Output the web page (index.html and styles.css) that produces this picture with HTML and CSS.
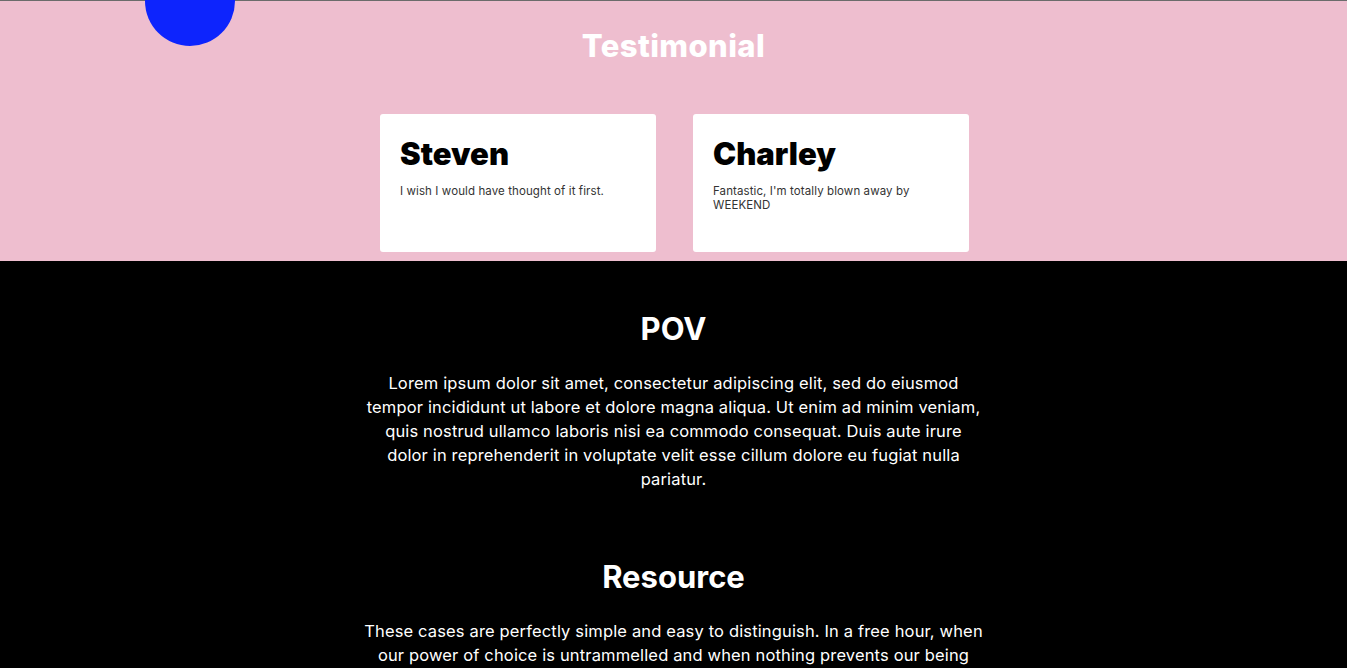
FILE: index.html
```html
<!DOCTYPE html>
<html lang="en">
<head>
<meta charset="utf-8">
<title>Testimonial</title>
<link rel="stylesheet" href="styles.css">
</head>
<body>
<section class="testimonial">
  <div class="blob"></div>
  <h2 class="section-title">Testimonial</h2>
  <div class="cards">
    <div class="card">
      <h3 class="card-name">Steven</h3>
      <p class="card-text">I wish I would have thought of it first.</p>
    </div>
    <div class="card">
      <h3 class="card-name">Charley</h3>
      <p class="card-text">Fantastic, I'm totally blown away by WEEKEND</p>
    </div>
  </div>
</section>
<section class="dark">
  <div class="block">
    <h2 class="dark-title">POV</h2>
    <p class="dark-text">Lorem ipsum dolor sit amet, consectetur adipiscing elit, sed do eiusmod tempor incididunt ut labore et dolore magna aliqua. Ut enim ad minim veniam, quis nostrud ullamco laboris nisi ea commodo consequat. Duis aute irure dolor in reprehenderit in voluptate velit esse cillum dolore eu fugiat nulla pariatur.</p>
  </div>
  <div class="block">
    <h2 class="dark-title">Resource</h2>
    <p class="dark-text">These cases are perfectly simple and easy to distinguish. In a free hour, when our power of choice is untrammelled and when nothing prevents our being able to do what we like best, every pleasure is to be welcomed and every pain avoided.</p>
  </div>
</section>
</body>
</html>
```
FILE: styles.css
```css
* { box-sizing: border-box; }
html, body { margin: 0; padding: 0; }
body {
  font-family: Inter, "Liberation Sans", sans-serif;
  background: #000;
  overflow: hidden;
  height: 668px;
}
.testimonial {
  position: relative;
  background: #eebecf;
  border-top: 1px solid #6b6b6b;
  height: 261px;
  display: flex;
  flex-direction: column;
  align-items: center;
}
.blob {
  position: absolute;
  left: 145px;
  top: -45px;
  width: 90px;
  height: 90px;
  border-radius: 50%;
  background: #0d24fd;
}
.section-title {
  margin: 28px 0 0;
  font-size: 31px;
  font-weight: 800;
  color: #fff;
  line-height: 34px;
  letter-spacing: 0.4px;
}
.cards {
  display: flex;
  gap: 37px;
  margin: 51px 0 0 2px;
}
.card {
  width: 276px;
  height: 138px;
  background: #fff;
  border-radius: 3px;
  padding: 20px 20px;
}
.card-name {
  margin: 0;
  font-size: 31px;
  font-weight: 900;
  line-height: 40px;
  color: #000;
  letter-spacing: 0;
}
.card-text {
  margin: 10px 0 0;
  font-size: 11.5px;
  line-height: 14px;
  color: #333;
  letter-spacing: 0.1px;
}
.dark {
  display: flex;
  flex-direction: column;
  align-items: center;
  color: #fff;
}
.block {
  width: 620px;
  text-align: center;
}
.dark-title {
  margin: 48px 0 0;
  font-size: 31px;
  font-weight: 700;
  line-height: 40px;
}
.dark-text {
  margin: 22px 0 0;
  font-size: 16.5px;
  line-height: 24px;
  font-weight: 400;
  letter-spacing: 0.15px;
}
.block + .block .dark-title { margin-top: 66px; }
```
